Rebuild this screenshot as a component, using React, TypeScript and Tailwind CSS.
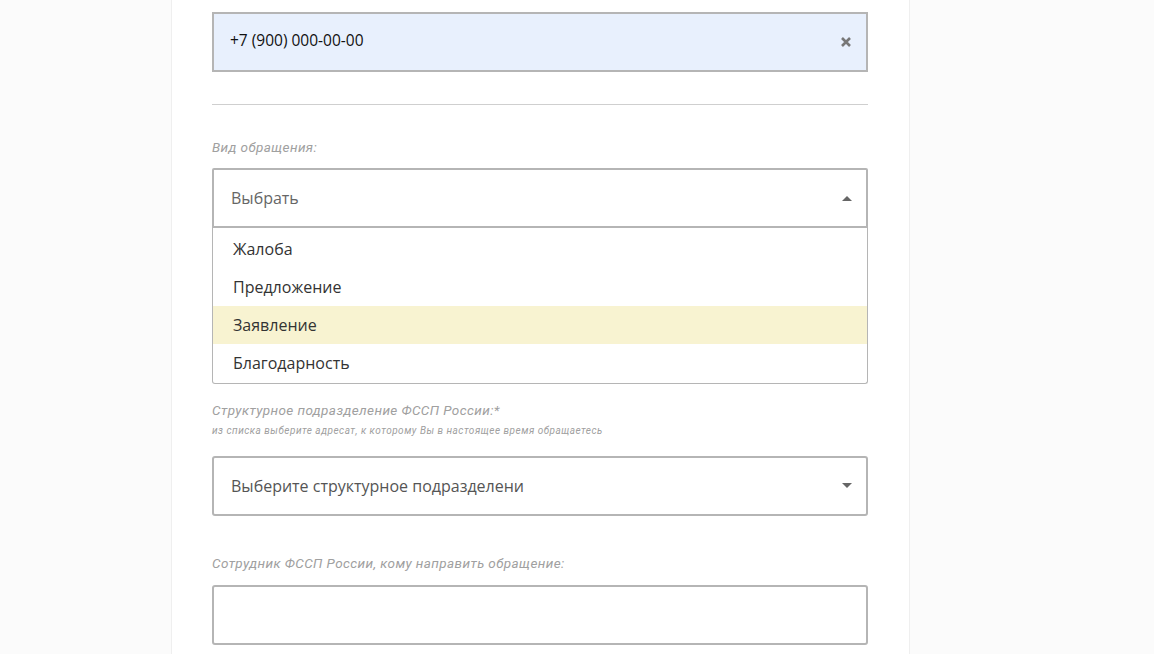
export default function App() {
  const f = { fontFamily: '"Open Sans", "Noto Sans", sans-serif' };
  const lab = { fontFamily: 'Roboto, "Noto Sans", sans-serif' };
  return (
    <div className="w-[1154px] h-[654px] overflow-hidden bg-[#fbfbfb] flex" style={f}>
      <div className="ml-[171px] w-[739px] h-full bg-white border-x border-[#efefef] pl-[40px] pr-[41px] flex flex-col">
        <div className="mt-[12px] h-[60px] bg-[#e8f0fd] border-2 border-[#b5b5b5] flex items-center justify-between pl-[16px] pr-[14px] text-[15.5px] text-[#111]">
          <span className="-mt-[3px]">+7 (900) 000-00-00</span>
          <svg width="12" height="12" viewBox="0 0 12 12"><path d="M2 2L10 10M10 2L2 10" stroke="#777" strokeWidth="2.6" /></svg>
        </div>
        <div className="mt-[32px] h-px bg-[#cfcfcf]" />
        <div className="mt-[32px] text-[13.5px] tracking-[0.03em] italic text-[#a0a0a0]" style={lab}>Вид обращения:</div>
        <div className="mt-[11px] h-[60px] border-2 border-[#b5b5b5] rounded-t-[2px] flex items-center justify-between pl-[17px] pr-[14px] text-[16px] text-[#666]">
          <span>Выбрать</span>
          <svg width="10" height="6" viewBox="0 0 10 6"><path d="M0 6L5 1L10 6Z" fill="#666" /></svg>
        </div>
        <div className="h-[156px] border-x border-b border-[#b5b5b5] rounded-b-[3px] pt-[2px] text-[16px] text-[#333]">
          {['Жалоба', 'Предложение', 'Заявление', 'Благодарность'].map((t, i) => (
            <div key={t} className={`h-[38px] flex items-center pl-[20px] ${i === 2 ? 'bg-[#f8f3d1]' : ''}`}>{t}</div>
          ))}
        </div>
        <div className="mt-[16px] text-[13.5px] tracking-[0.03em] italic text-[#a0a0a0]" style={lab}>Структурное подразделение ФССП России:*</div>
        <div className="mt-[2px] text-[10px] tracking-[0.05em] italic text-[#a0a0a0]" style={lab}>из списка выберите адресат, к которому Вы в настоящее время обращаетесь</div>
        <div className="mt-[18px] h-[60px] border-2 border-[#b5b5b5] rounded-[3px] flex items-center justify-between pl-[17px] pr-[14px] text-[16px] text-[#555]">
          <span>Выберите структурное подразделени</span>
          <svg width="10" height="6" viewBox="0 0 10 6"><path d="M0 0L5 5L10 0Z" fill="#666" /></svg>
        </div>
        <div className="mt-[37px] text-[13.5px] tracking-[0.03em] italic text-[#a0a0a0]" style={lab}>Сотрудник ФССП России, кому направить обращение:</div>
        <div className="mt-[12px] h-[60px] border-2 border-[#b5b5b5] rounded-[3px] shrink-0" />
      </div>
    </div>
  );
}
